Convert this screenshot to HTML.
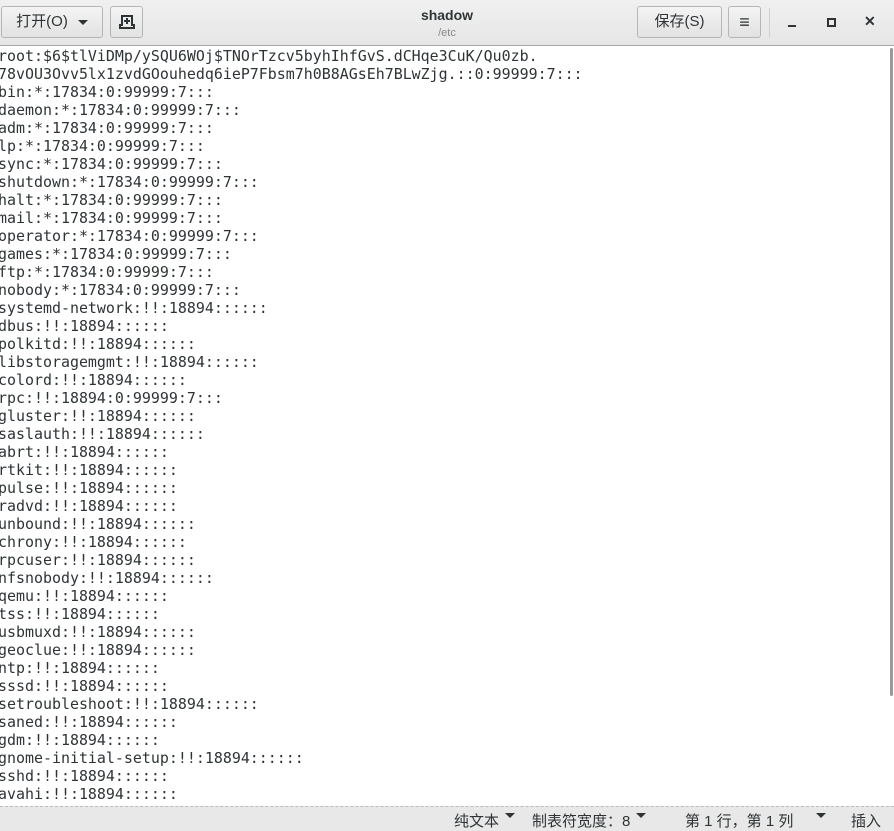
<!DOCTYPE html><html><head><meta charset="utf-8"><style>
body{margin:0;width:894px;height:830px;overflow:hidden;background:#fff;font-family:"Liberation Sans","Noto Sans CJK SC",sans-serif;position:relative}
.hb{position:absolute;top:0;left:0;width:894px;height:45px;background:linear-gradient(#f0f0f0,#e6e6e6);border-bottom:1px solid #a8a8a8}
.btn{position:absolute;top:6px;height:32px;border:1px solid #b6b6b6;border-radius:3px;background:linear-gradient(#f4f4f4,#e2e2e2);box-sizing:border-box;font-size:15px;color:#2e3436;line-height:30px;text-align:center}
.t{position:absolute;left:0;right:0;text-align:center}
pre{position:absolute;left:-2px;top:47px;margin:0;font-family:"DejaVu Sans Mono",monospace;font-size:14.95px;line-height:18px;color:#2e3436}
.sb{position:absolute;left:0;top:806px;width:894px;height:24px;background:#e8e8e8;border-top:1px dashed #bbb;font-size:15px;color:#2e3436;font-family:"WenQuanYi Zen Hei",sans-serif}
.sb span{position:absolute;top:3px}
.ar{display:inline-block;border-left:5px solid transparent;border-right:5px solid transparent;border-top:5px solid #2e3436;vertical-align:middle;margin-left:6px}
</style></head><body>
<div class="hb">
<div class="btn" style="left:1px;width:102px">打开(O)<span class="ar" style="margin-left:10px"></span></div>
<div class="btn" style="left:110px;width:33px"><svg width="16" height="16" viewBox="0 0 16 16" style="margin-top:7px"><path d="M3 2h10v9h2v3H1v-3h2z" fill="none" stroke="#2e3436" stroke-width="2"/><path d="M8 4v6M5 7h6" stroke="#2e3436" stroke-width="2"/></svg></div>
<div class="t" style="top:7px;font-size:14px;font-weight:bold;color:#2e3436">shadow</div>
<div class="t" style="top:27px;font-size:11px;color:#888">/etc</div>
<div class="btn" style="left:637px;width:85px">保存(S)</div>
<div class="btn" style="left:728px;width:33px;font-size:18px">≡</div>
<div style="position:absolute;left:769px;top:8px;width:1px;height:30px;background:#d0d0d0"></div>
<div style="position:absolute;left:788px;top:25px;width:8px;height:2px;background:#2e3436"></div>
<div style="position:absolute;left:827px;top:18px;width:5px;height:5px;border:2px solid #2e3436"></div>
<div style="position:absolute;left:864px;top:13px;font-size:14px;font-weight:bold;color:#2e3436">✕</div>
</div>
<div style="position:absolute;left:890px;top:48px;width:3px;height:648px;background:#9a9a9a;border-radius:2px"></div>
<pre>root:$6$tlViDMp/ySQU6WOj$TNOrTzcv5byhIhfGvS.dCHqe3CuK/Qu0zb.
78vOU3Ovv5lx1zvdGOouhedq6ieP7Fbsm7h0B8AGsEh7BLwZjg.::0:99999:7:::
bin:*:17834:0:99999:7:::
daemon:*:17834:0:99999:7:::
adm:*:17834:0:99999:7:::
lp:*:17834:0:99999:7:::
sync:*:17834:0:99999:7:::
shutdown:*:17834:0:99999:7:::
halt:*:17834:0:99999:7:::
mail:*:17834:0:99999:7:::
operator:*:17834:0:99999:7:::
games:*:17834:0:99999:7:::
ftp:*:17834:0:99999:7:::
nobody:*:17834:0:99999:7:::
systemd-network:!!:18894::::::
dbus:!!:18894::::::
polkitd:!!:18894::::::
libstoragemgmt:!!:18894::::::
colord:!!:18894::::::
rpc:!!:18894:0:99999:7:::
gluster:!!:18894::::::
saslauth:!!:18894::::::
abrt:!!:18894::::::
rtkit:!!:18894::::::
pulse:!!:18894::::::
radvd:!!:18894::::::
unbound:!!:18894::::::
chrony:!!:18894::::::
rpcuser:!!:18894::::::
nfsnobody:!!:18894::::::
qemu:!!:18894::::::
tss:!!:18894::::::
usbmuxd:!!:18894::::::
geoclue:!!:18894::::::
ntp:!!:18894::::::
sssd:!!:18894::::::
setroubleshoot:!!:18894::::::
saned:!!:18894::::::
gdm:!!:18894::::::
gnome-initial-setup:!!:18894::::::
sshd:!!:18894::::::
avahi:!!:18894::::::</pre>
<div class="sb">
<span style="left:454px">纯文本<span class="ar"></span></span>
<span style="left:532px">制表符宽度：8<span class="ar"></span></span>
<span style="left:685px">第 1 行，第 1 列</span>
<span style="left:810px"><span class="ar"></span></span>
<span style="left:851px">插入</span>
</div>
</body></html>
